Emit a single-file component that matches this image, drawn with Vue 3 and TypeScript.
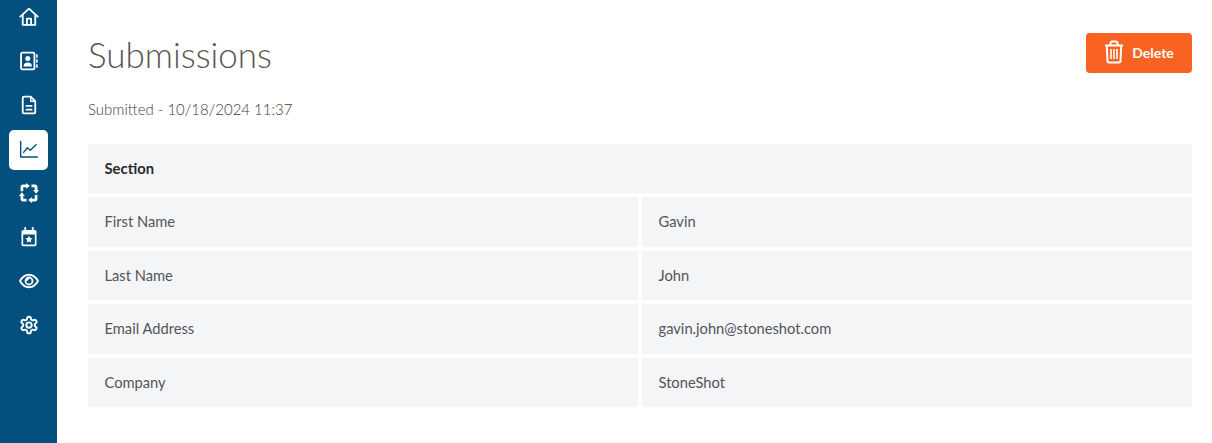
<script setup lang="ts">
const rows: [string, string][] = [
  ['First Name', 'Gavin'],
  ['Last Name', 'John'],
  ['Email Address', 'gavin.john@stoneshot.com'],
  ['Company', 'StoneShot'],
]
</script>

<template>
  <div class="app">
    <nav class="rail">
      <a class="item">
        <svg viewBox="0 0 24 24" fill="none" stroke="#fff" stroke-width="2.200" stroke-linejoin="round" stroke-linecap="round"><path d="M1.500 11.500 12 2l10.500 9.500"/><path d="M4.500 9.500v12h15v-12"/><path d="M9.500 21.500V14h5v7.500"/></svg>
      </a>
      <a class="item">
        <svg viewBox="0 0 24 24" fill="none" stroke="#fff" stroke-width="2.200" stroke-linejoin="round"><rect x="2.500" y="2" width="16" height="20" rx="1.500"/><circle cx="10.500" cy="9" r="3" fill="#fff" stroke="none"/><path d="M5.500 18c0-5.500 10-5.500 10 0v.5h-10z" fill="#fff" stroke="none"/><path d="M21.500 4v4M21.500 10v4M21.500 16v4" stroke-width="1.800"/></svg>
      </a>
      <a class="item">
        <svg viewBox="0 0 24 24" fill="none" stroke="#fff" stroke-width="2.200" stroke-linejoin="round"><path d="M4.500 3.500A1.500 1.500 0 0 1 6 2h8l5.500 5.500v13a1.500 1.500 0 0 1-1.500 1.500H6a1.500 1.500 0 0 1-1.500-1.500z"/><path d="M14 2v5.500h5.500" stroke-width="1.600"/><path d="M8 13h8M8 17.500h8"/></svg>
      </a>
      <a class="item active">
        <svg viewBox="0 0 24 24" fill="none" stroke="#03507f" stroke-width="1.700" stroke-linejoin="round" stroke-linecap="round"><path d="M2 3v18.500h20"/><path d="M5.500 16 10 10.500l3.500 3L20.500 7"/></svg>
      </a>
      <a class="item">
        <svg viewBox="0 0 24 24" fill="#fff" stroke="none"><path d="M3.500 10V5a1.500 1.500 0 0 1 1.500-1.500h4" fill="none" stroke="#fff" stroke-width="3.200"/><path d="M8.500 0 13 3.500 8.500 7z"/><path d="M15 3.500h4A1.500 1.500 0 0 1 20.500 5v4.500" fill="none" stroke="#fff" stroke-width="3.200"/><path d="M17 8.500h7L20.500 13z"/><path d="M20.500 14.500V19a1.500 1.500 0 0 1-1.500 1.500h-4" fill="none" stroke="#fff" stroke-width="3.200"/><path d="M15.500 17v7L11 20.500z"/><path d="M9 20.500H5A1.500 1.500 0 0 1 3.500 19v-4.500" fill="none" stroke="#fff" stroke-width="3.200"/><path d="M0 15.500h7L3.500 11z"/></svg>
      </a>
      <a class="item">
        <svg viewBox="0 0 24 24" fill="none"><path d="M5 3.500h14a2 2 0 0 1 2 2V21a2 2 0 0 1-2 2H5a2 2 0 0 1-2-2V5.500a2 2 0 0 1 2-2z" fill="#fff"/><rect x="5" y="9" width="14" height="12" fill="#03507f"/><path d="M7.500 1v4M16.500 1v4" stroke="#fff" stroke-width="2.200" stroke-linecap="round"/><path d="m12 10.500 1.400 2.700 3 .4-2.200 2.100.5 3-2.700-1.400-2.700 1.400.5-3-2.200-2.100 3-.4z" fill="#fff"/></svg>
      </a>
      <a class="item">
        <svg viewBox="0 0 24 24" fill="none" stroke="#fff" stroke-width="2.200"><path d="M1.200 12C4 7 7.800 4.500 12 4.500S20 7 22.800 12C20 17 16.200 19.500 12 19.500S4 17 1.200 12z"/><circle cx="12" cy="12" r="4.200"/><path d="M8.800 12a3.200 3.200 0 0 1 3.200-3.200" stroke-width="2.800"/></svg>
      </a>
      <a class="item">
        <svg viewBox="0 0 24 24" fill="none" stroke="#fff" stroke-width="2.300" stroke-linejoin="round"><path d="M12.220 2h-.44a2 2 0 0 0-2 2v.18a2 2 0 0 1-1 1.730l-.43.250a2 2 0 0 1-2 0l-.15-.080a2 2 0 0 0-2.730.730l-.220.380a2 2 0 0 0 .730 2.730l.150.100a2 2 0 0 1 1 1.720v.510a2 2 0 0 1-1 1.740l-.150.090a2 2 0 0 0-.730 2.730l.220.380a2 2 0 0 0 2.730.730l.150-.080a2 2 0 0 1 2 0l.430.250a2 2 0 0 1 1 1.730V20a2 2 0 0 0 2 2h.440a2 2 0 0 0 2-2v-.180a2 2 0 0 1 1-1.730l.430-.250a2 2 0 0 1 2 0l.150.080a2 2 0 0 0 2.730-.730l.220-.390a2 2 0 0 0-.730-2.730l-.150-.080a2 2 0 0 1-1-1.740v-.500a2 2 0 0 1 1-1.740l.150-.090a2 2 0 0 0 .730-2.730l-.220-.380a2 2 0 0 0-2.730-.730l-.150.080a2 2 0 0 1-2 0l-.430-.250a2 2 0 0 1-1-1.730V4a2 2 0 0 0-2-2z"/><circle cx="12" cy="12" r="3.200"/></svg>
      </a>
    </nav>
    <main class="content">
      <header class="head">
        <h1>Submissions</h1>
        <button class="delete" type="button">
          <svg viewBox="0 0 20 24" width="20" height="24" fill="none" stroke="#fff" stroke-width="2" stroke-linejoin="round"><path d="M1 5.500h18"/><path d="M6.500 5V3a1.500 1.500 0 0 1 1.500-1.500h4A1.500 1.500 0 0 1 13.500 3v2"/><path d="M2.800 5.500 3.500 21a1.500 1.500 0 0 0 1.500 1.500h10a1.500 1.500 0 0 0 1.500-1.500l.7-15.500"/><path d="M7 9v10M10 9v10M13 9v10" stroke-width="1.600"/></svg>
          <span>Delete</span>
        </button>
      </header>
      <p class="sub">Submitted - 10/18/2024 11:37</p>
      <div class="table">
        <div class="section">Section</div>
        <template v-for="r in rows" :key="r[0]">
          <div class="cell">{{ r[0] }}</div>
          <div class="cell">{{ r[1] }}</div>
        </template>
      </div>
    </main>
  </div>
</template>

<style>
html, body { margin: 0; background: #fff; }
</style>

<style scoped>
.app { display: flex; height: 443px; overflow: hidden; font-family: Lato, "Noto Sans", sans-serif; color: #4a4a4a; }
.rail { width: 57px; flex: none; background: #03507f; display: flex; flex-direction: column; align-items: center; gap: 4px; box-sizing: border-box; }
.item { width: 39px; height: 40px; flex: none; display: flex; align-items: center; justify-content: center; border-radius: 5px; }
.item:first-child { margin-top: -2px; }
.item svg { width: 20px; height: 20px; margin-bottom: 2px; }
.item.active { background: #fff; }
.content { flex: 1; padding: 33px 20px 0 31px; min-width: 0; }
.head { display: flex; justify-content: space-between; align-items: flex-start; height: 40px; }
h1 { margin: -2px 0 0; font-size: 35px; font-weight: 300; line-height: 46px; color: #5a5552; }
.delete { width: 106px; height: 40px; background: #f96221; border: none; border-radius: 4px; color: #fff; display: flex; align-items: center; justify-content: center; gap: 8px; font: 700 14px Lato, sans-serif; padding: 0 0 2px; }
.sub { margin: 24px 0 0; font-size: 15px; line-height: 24px; font-weight: 300; color: #3f3b38; }
.table { margin-top: 23px; display: grid; grid-template-columns: 1fr 1fr; grid-template-rows: 49px repeat(4, 49.600px); gap: 4px; }
.section { grid-column: 1 / -1; background: #f4f5f7; padding: 0 0 1px 16.500px; display: flex; align-items: center; font-weight: 700; font-size: 14.800px; color: #2b2b2b; }
.cell { background: #f4f5f7; padding: 0 0 1px 16.500px; display: flex; align-items: center; font-size: 14.700px; color: #54545a; }
</style>
